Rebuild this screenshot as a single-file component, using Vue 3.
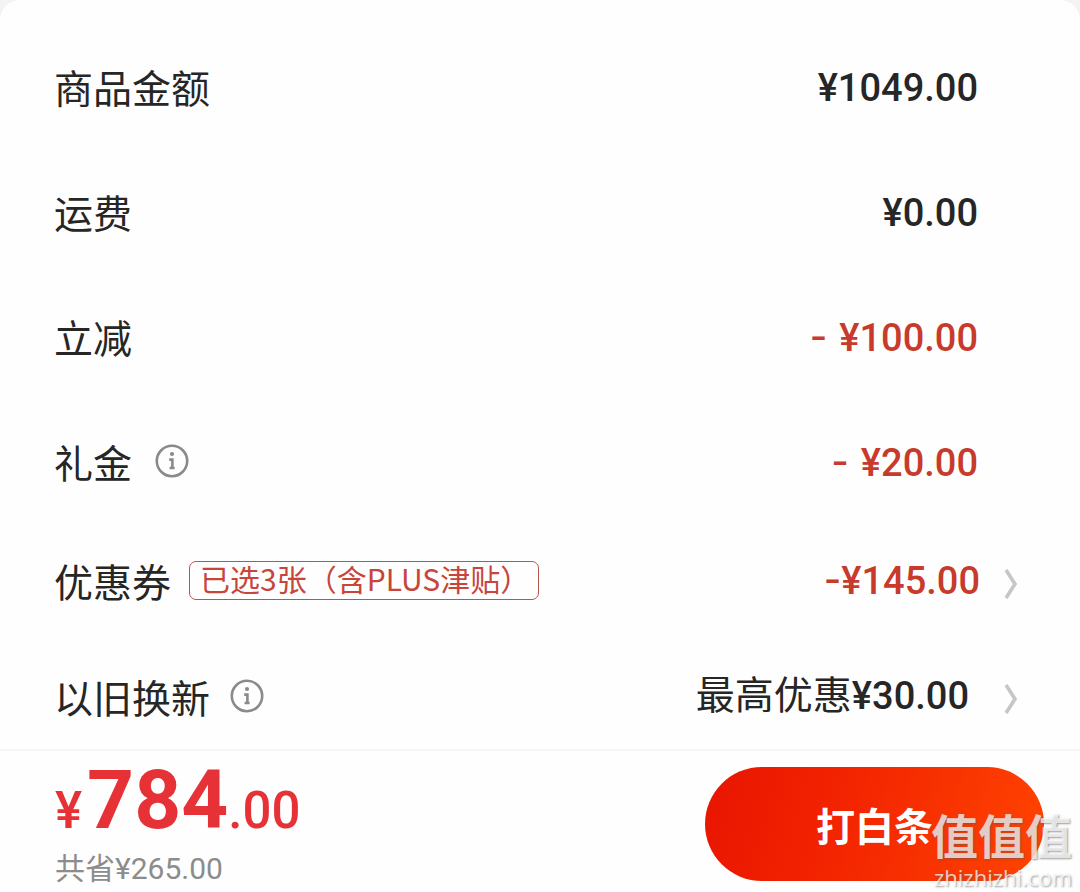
<script setup>
const rows = [
  { label: '商品金额', amount: '¥1049.00' },
  { label: '运费', amount: '¥0.00' },
  { label: '立减', sign: '-', amount: '¥100.00', red: true },
  { label: '礼金', sign: '-', amount: '¥20.00', red: true, info: true },
  { label: '优惠券', sign: '-', tight: true, amount: '¥145.00', red: true, tag: '已选3张（含PLUS津贴）', link: true },
  { label: '以旧换新', note: '最高优惠', amount: '¥30.00', info: true, link: true, last: true }
]
</script>

<template>
  <main class="sheet">
    <dl class="rows">
      <div v-for="row in rows" :key="row.label" class="row" :class="{ linked: row.link, last: row.last }">
        <dt class="label">
          <span>{{ row.label }}</span>
          <button v-if="row.info" class="info" type="button" :aria-label="row.label + '说明'">
            <svg viewBox="0 0 34 34" width="34" height="34" fill="none" stroke="#8a8a8a">
              <circle cx="17" cy="17" r="15.2" stroke-width="2.6" />
              <circle cx="17" cy="10" r="2.1" fill="#8a8a8a" stroke="none" />
              <path d="M14.2 15.6h3.2v9M14.6 24h5" stroke-width="2.6" />
            </svg>
          </button>
          <span v-if="row.tag" class="tag">{{ row.tag }}</span>
        </dt>
        <dd class="value" :class="{ red: row.red }">
          <span v-if="row.note" class="note">{{ row.note }}</span>
          <span v-if="row.sign" class="sign" :class="{ tight: row.tight }">{{ row.sign }}</span>
          <span>{{ row.amount }}</span>
          <button v-if="row.link" class="more" type="button" :aria-label="row.label">
            <svg viewBox="0 0 14 32" width="14" height="32" fill="none" stroke="#c6c6c6" stroke-width="3.6">
              <path d="M2 2l9 14-9 14" />
            </svg>
          </button>
        </dd>
      </div>
    </dl>
    <footer class="bar">
      <div class="total">
        <p class="price"><span>¥</span><strong>784</strong><span>.00</span></p>
        <p class="saved">共省¥265.00</p>
      </div>
      <button class="pay" type="button">打白条</button>
      <div class="mark">
        <span class="mark-name">值值值</span>
        <span class="mark-site">zhizhizhi.com</span>
      </div>
    </footer>
  </main>
</template>

<style>
body {
  background: #f3f3f3;
}
</style>

<style scoped>
.sheet {
  background: #fefefe;
  border-radius: 20px 20px 0 0;
  color: #262626;
  font-family: Roboto, "Noto Sans CJK SC", sans-serif;
  font-size: 38px;
  line-height: 56px;
}
.rows {
  margin: 0;
  padding-top: 25px;
}
.row {
  display: flex;
  justify-content: space-between;
  align-items: center;
  min-height: 125px;
  padding: 0 102px 0 54px;
}
.row.linked {
  min-height: 112px;
  padding-right: 62px;
}
.label {
  display: flex;
  align-items: center;
  padding-bottom: 4px;
  font-family: "Noto Sans CJK SC", sans-serif;
  font-size: 39px;
}
.linked .label {
  padding-bottom: 2px;
}
.value {
  display: flex;
  align-items: center;
  margin: 0;
  font-weight: 500;
}
.red {
  color: #c73a2c;
}
.note {
  padding-bottom: 8px;
  font-family: "Noto Sans CJK SC", sans-serif;
  font-size: 39px;
  font-weight: 400;
}
.sign {
  margin-right: 12px;
  padding-bottom: 4px;
  font-family: Inter, sans-serif;
}
.sign.tight {
  margin-right: 0;
}
button {
  border: 0;
  padding: 0;
  background: none;
  font: inherit;
}
button svg {
  display: block;
}
.info {
  margin-left: 23px;
}
.last .info {
  margin-left: 20px;
}
.last .label {
  padding-top: 8px;
}
.last .value {
  padding-top: 6px;
}
.more {
  margin-left: 24px;
  padding-top: 6px;
}
.last .more {
  margin-left: 35px;
}
.tag {
  margin-left: 18px;
  padding: 0 8px 4px 10px;
  border: 1px solid #b8564e;
  border-radius: 7px;
  color: #c8453a;
  font-size: 30px;
  line-height: 33px;
}
.bar {
  position: relative;
  display: flex;
  justify-content: space-between;
  align-items: flex-start;
  padding: 16px 36px 6px 55px;
  border-top: 2px solid #f6f6f6;
}
.total p {
  margin: 0;
}
.price {
  display: flex;
  align-items: baseline;
  color: #e63237;
  font-size: 51px;
  font-weight: 500;
  line-height: 48px;
}
.price strong {
  margin-left: 5px;
  font-size: 82px;
  font-weight: 700;
  line-height: 66px;
}
.saved {
  padding-top: 14px;
  color: #8c8c8c;
  font-size: 30px;
  line-height: 40px;
}
.pay {
  flex: none;
  width: 339px;
  height: 114px;
  border-radius: 57px;
  background: linear-gradient(105deg, #e81500 0%, #f32400 40%, #ff4400 100%);
  color: #fff;
  font-family: "Noto Sans CJK SC", sans-serif;
  font-size: 39px;
  font-weight: 700;
}
.mark {
  position: absolute;
  right: 8px;
  bottom: 4px;
  display: flex;
  flex-direction: column;
  align-items: flex-end;
  gap: 3px;
  color: rgba(255, 255, 255, 0.74);
  font-family: "Noto Sans CJK SC", sans-serif;
  text-shadow: 1px 1px 2px rgba(90, 90, 90, 0.6);
}
.mark-name {
  font-size: 47px;
  font-weight: 700;
  line-height: 52px;
}
.mark-site {
  font-family: "Open Sans", sans-serif;
  font-size: 22px;
  line-height: 28px;
}
</style>
